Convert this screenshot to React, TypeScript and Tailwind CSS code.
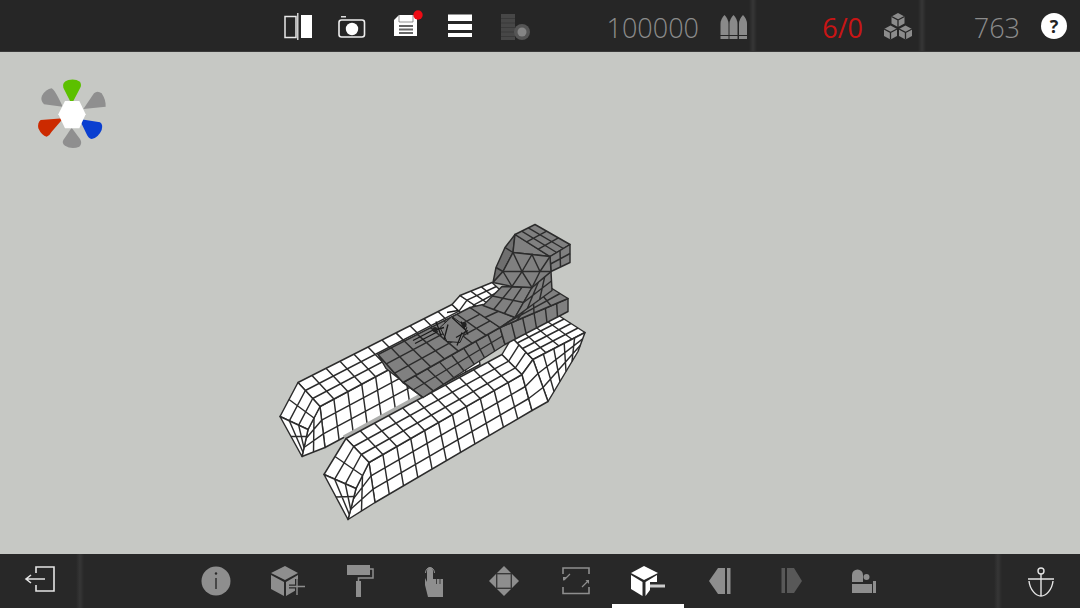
import React from "react";

type P = [number, number];
const lerp = (a: P, b: P, t: number): P => [a[0] + (b[0] - a[0]) * t, a[1] + (b[1] - a[1]) * t];
const LINE = "#2c2c2c";
const SW = 1.45;

function Grid({ q, nu, nv, fill }: { q: [P, P, P, P]; nu: number; nv: number; fill: string }) {
  const [a, b, c, d] = q;
  const lines: string[] = [];
  for (let i = 1; i < nu; i++) {
    const t = i / nu;
    const p = lerp(a, b, t), r = lerp(d, c, t);
    lines.push(`M${p[0]} ${p[1]}L${r[0]} ${r[1]}`);
  }
  for (let j = 1; j < nv; j++) {
    const t = j / nv;
    const p = lerp(a, d, t), r = lerp(b, c, t);
    lines.push(`M${p[0]} ${p[1]}L${r[0]} ${r[1]}`);
  }
  return (
    <g>
      <polygon points={q.map((p) => p.join(",")).join(" ")} fill={fill} stroke={LINE} strokeWidth={SW} strokeLinejoin="round" />
      <path d={lines.join("")} fill="none" stroke={LINE} strokeWidth={SW} />
    </g>
  );
}

const W = "#ffffff";
const G = "#808080";

function FarHull() {
  return (
    <g>
      <Grid q={[[320, 407], [473, 325], [480, 365], [325, 448]]} nu={11} nv={3} fill={W} />
      <Grid q={[[320, 407], [325, 448], [302, 457], [308, 430]]} nu={3} nv={2} fill={W} />
      <Grid q={[[298, 383], [452, 305], [473, 325], [320, 407]]} nu={11} nv={3} fill={W} />
      <Grid q={[[280, 417], [298, 383], [320, 407], [308, 430]]} nu={2} nv={3} fill={W} />
      <Grid q={[[280, 417], [308, 430], [305, 444], [302, 457]]} nu={3} nv={2} fill={W} />
      <Grid q={[[452, 305], [460, 296], [481, 310], [473, 325]]} nu={1} nv={3} fill={W} />
      <Grid q={[[460, 296], [492, 283], [505, 295], [481, 310]]} nu={3} nv={3} fill={W} />
    </g>
  );
}

function NearHull() {
  return (
    <g>
      <Grid q={[[369, 463], [522, 375], [532, 411], [375, 503]]} nu={11} nv={3} fill={W} />
      <Grid q={[[369, 463], [375, 503], [348, 520], [356, 489]]} nu={3} nv={2} fill={W} />
      <Grid q={[[346, 439], [502, 355], [522, 375], [369, 463]]} nu={11} nv={3} fill={W} />
      <Grid q={[[324, 475], [346, 439], [369, 463], [356, 489]]} nu={2} nv={3} fill={W} />
      <Grid q={[[324, 475], [356, 489], [352, 505], [348, 520]]} nu={3} nv={2} fill={W} />
      <Grid q={[[502, 355], [512, 338], [533, 360], [522, 375]]} nu={1} nv={3} fill={W} />
      <Grid q={[[512, 338], [557, 315], [585, 333], [533, 360]]} nu={4} nv={4} fill={W} />
      <Grid q={[[533, 360], [585, 333], [578, 352], [548, 402]]} nu={5} nv={3} fill={W} />
      <Grid q={[[522, 375], [533, 360], [548, 402], [532, 411]]} nu={1} nv={3} fill={W} />
    </g>
  );
}

function Mesh() {
  return (
    <svg viewBox="0 53 1080 501" className="absolute inset-0 w-full h-full">
      <FarHull />
      <polygon points="343,436 420,394 425,398 346,441" fill="#adaeac" />
      <NearHull />
      {/* grey superstructure */}
      <Grid q={[[403, 383], [500, 328], [505, 345], [423, 398]]} nu={8} nv={2} fill={G} />
      <Grid q={[[500, 328], [568, 299], [568, 312], [505, 345]]} nu={6} nv={1} fill={G} />
      <polygon points="378,355 403,383 423,398 386,369" fill={G} stroke={LINE} strokeWidth={SW} strokeLinejoin="round" />
      <Grid q={[[378, 355], [470, 308], [500, 328], [403, 383]]} nu={7} nv={3} fill={G} />
      <Grid q={[[470, 308], [483, 305], [515, 318], [500, 328]]} nu={1} nv={2} fill={G} />
      <Grid q={[[515, 318], [552, 289], [568, 299], [500, 328]]} nu={4} nv={2} fill={G} />
      {/* neck */}
      <Grid q={[[502, 287], [532, 288], [515, 318], [483, 306]]} nu={3} nv={2} fill={G} />
      <Grid q={[[532, 288], [551, 272], [552, 291], [515, 318]]} nu={3} nv={2} fill={G} />
      {/* head */}
      <polygon points="515,235 505,248 496,268 493,283 503,272 513,253" fill="#6f6f6f" stroke={LINE} strokeWidth={SW} strokeLinejoin="round" />
      <path d="M505 248L513 253M496 268L503 272" stroke={LINE} strokeWidth={SW} fill="none" />
      <polygon points="515,235 550,257 513,253" fill={G} stroke={LINE} strokeWidth={SW} strokeLinejoin="round" />
      <Grid q={[[515, 235], [535, 225], [570, 245], [550, 257]]} nu={3} nv={3} fill={G} />
      <Grid q={[[550, 257], [570, 245], [570, 263], [551, 272]]} nu={2} nv={2} fill={G} />
      <polygon points="513,253 550,257 551,272 532,288 512,287 493,283 503,272" fill={G} stroke={LINE} strokeWidth={SW} strokeLinejoin="round" />
      <path
        d="M513 253L522 272L532 255L540 272L550 257M503 272H551M503 272L512 287L522 272L532 288L540 272"
        fill="none"
        stroke={LINE}
        strokeWidth={SW}
      />
      {/* turret */}
      <polygon points="440,328 452,317 467,328 460,343 447,342" fill={G} stroke="#222" strokeWidth="1" />
      <path
        d="M413 341L436 329M415 344L438 332M447 313L458 311M452 318L465 330M456 338L468 331M448 325L444 340M436 322L441 336M433 331L444 328M461 322L468 335M462 333L457 346"
        fill="none"
        stroke="#1a1a1a"
        strokeWidth="1.3"
      />
      <circle cx="435" cy="330" r="2.6" fill="#222" />
      <circle cx="464" cy="325" r="2.6" fill="#222" />
    </svg>
  );
}

function Gizmo() {
  return (
    <svg viewBox="0 0 300 300" className="relative w-[100px] h-[100px]">
      <path d="M128 125L72 118Q60 105 66 92Q78 72 95 70Q105 75 128 125Z" fill="#8f8f8f" />
      <path d="M190 132L222 85Q232 76 245 85Q258 105 257 125Z" fill="#8f8f8f" />
      <path d="M155 188L130 225Q125 235 135 242Q155 255 178 245Q188 235 180 222Z" fill="#8f8f8f" />
      <path d="M155 118L130 68Q125 52 145 45Q165 40 180 50Q186 60 180 70Z" fill="#5cc000" />
      <path d="M130 160L62 165Q52 172 55 190Q65 212 80 215Q90 210 95 200Z" fill="#cc2a00" />
      <path d="M178 162L240 172Q250 178 245 195Q235 218 215 222Q205 220 200 208Z" fill="#0a3fd0" />
      <polygon points="135,108 178,108 197,148 178,190 135,190 115,148" fill="#ffffff" />
    </svg>
  );
}

function Slot({ x, y, w, h, children }: { x: number; y: number; w: number; h: number; children?: React.ReactNode }) {
  return (
    <svg viewBox={`${x} ${y} ${w} ${h}`} style={{ width: w, height: h }} className="shrink-0 block">
      {children}
    </svg>
  );
}

const Divider = () => (
  <div className="w-[8px] h-full shrink-0 bg-[linear-gradient(to_right,transparent,#363636,transparent)]" />
);

const GR = "#8e8e8e";

function Cube({ cx, cy }: { cx: number; cy: number }) {
  return (
    <g>
      <polygon
        points={`${cx},${cy - 7} ${cx + 6.5},${cy - 3.5} ${cx + 6.5},${cy + 3.5} ${cx},${cy + 7} ${cx - 6.5},${cy + 3.5} ${cx - 6.5},${cy - 3.5}`}
        fill="#8c8c8c"
      />
      <path d={`M${cx} ${cy + 7}V${cy}L${cx - 6.5} ${cy - 3.5}M${cx} ${cy}L${cx + 6.5} ${cy - 3.5}`} stroke="#262626" strokeWidth="1.3" fill="none" />
    </g>
  );
}

function TopBar() {
  const num = "text-[27px] leading-none font-light text-right pt-[3px] text-[#8c8c8c] shrink-0 [font-family:'Open_Sans',sans-serif]";
  return (
    <div className="h-[52px] bg-[#262626] flex items-center pl-[271px] shrink-0 border-b border-[#3a3a3a]">
      <Slot x={271} y={0} w={54} h={52}>
        <rect x="285" y="16.5" width="11" height="21" fill="none" stroke="#e8e8e8" strokeWidth="1.5" />
        <rect x="297" y="13" width="1.5" height="27" fill="#cfcfcf" />
        <rect x="301" y="15" width="11" height="23" fill="#fff" />
      </Slot>
      <Slot x={325} y={0} w={54} h={52}>
        <rect x="339" y="20" width="25.5" height="17" rx="2.5" fill="none" stroke="#eee" strokeWidth="1.6" />
        <rect x="341" y="16" width="5" height="1.5" fill="#ddd" />
        <circle cx="352" cy="29" r="6.2" fill="#fff" />
      </Slot>
      <Slot x={379} y={0} w={54} h={52}>
        <path d="M399 15H417V36H394V20Z" fill="#fff" />
        <path d="M399 15V22H413V15" fill="none" stroke="#666" strokeWidth="0.7" />
        <rect x="399" y="25" width="14" height="2" fill="#666" />
        <rect x="399" y="28.5" width="14" height="2" fill="#666" />
        <rect x="399" y="32" width="14" height="2" fill="#666" />
        <circle cx="418" cy="15" r="4.7" fill="#ee0b14" />
      </Slot>
      <Slot x={433} y={0} w={54} h={52}>
        <rect x="448" y="14.5" width="24" height="6.5" fill="#fff" />
        <rect x="448" y="24" width="24" height="6" fill="#fff" />
        <rect x="448" y="33" width="24" height="4" fill="#fff" />
      </Slot>
      <Slot x={487} y={0} w={54} h={52}>
        <path d="M501 14H515V40H501Z" fill="#474747" />
        <path d="M501 18.5H515M501 23H515M501 27.5H515M501 32H515M501 36.5H515" stroke="#3a3a3a" strokeWidth="1" />
        <circle cx="522" cy="32" r="8" fill="#555" />
        <circle cx="522" cy="32" r="4.5" fill="#858585" />
      </Slot>
      <div className={`${num} w-[158px]`}>100000</div>
      <Slot x={699} y={0} w={50} h={52}>
        {[720.5, 729.5, 739].map((x) => (
          <g key={x}>
            <path d={`M${x} 24Q${x} 19 ${x + 4} 15Q${x + 8} 19 ${x + 8} 24V35H${x}Z`} fill="#8a8a8a" />
            <rect x={x} y={36} width="8" height="3" fill="#8a8a8a" />
          </g>
        ))}
      </Slot>
      <Divider />
      <div className={`${num} !text-[#c91515] !font-normal w-[106px]`}>6/0</div>
      <Slot x={861} y={0} w={55} h={52}>
        <Cube cx={896} cy={20} />
        <Cube cx={888.5} cy={32.5} />
        <Cube cx={903.5} cy={32.5} />
      </Slot>
      <Divider />
      <div className={`${num} w-[94px]`}>763</div>
      <div className="w-[62px] flex pl-[21px] shrink-0">
        <div className="w-[26px] h-[26px] rounded-full bg-white flex items-center justify-center text-[18px] font-bold text-[#222] leading-none [font-family:'Open_Sans',sans-serif]">
          ?
        </div>
      </div>
    </div>
  );
}

function BottomBar() {
  const Cell = ({ x, active, children }: { x: number; active?: boolean; children: React.ReactNode }) => (
    <div className={`w-[72px] h-[54px] shrink-0 ${active ? "border-b-4 border-white" : ""}`}>
      <Slot x={x} y={554} w={72} h={active ? 50 : 54}>
        {children}
      </Slot>
    </div>
  );
  return (
    <div className="h-[54px] bg-[#282828] flex items-center shrink-0">
      <Slot x={0} y={554} w={76} h={54}>
        <path d="M36 573V567H54V591H36V585" fill="none" stroke="#e4e4e4" strokeWidth="1.6" />
        <path d="M45 579H27M31 575L26 579L31 583" fill="none" stroke="#e4e4e4" strokeWidth="1.6" />
      </Slot>
      <Divider />
      <div className="w-[96px] shrink-0" />
      <Cell x={180}>
        <circle cx="216" cy="581" r="14.5" fill={GR} />
        <rect x="215.3" y="578" width="1.4" height="11" fill="#2a2a2a" />
        <circle cx="216" cy="573.5" r="1.2" fill="#2a2a2a" />
      </Cell>
      <Cell x={252}>
        <path d="M285 566L298 573L285 580L271 573Z" fill={GR} />
        <path d="M271 575L284 582V596L271 589Z" fill={GR} />
        <path d="M286 582L298 575V589L286 596Z" fill={GR} />
        <path d="M289 586.5H305M297 579V595" stroke="#282828" strokeWidth="4" />
        <path d="M289 586.5H305M297 579V595" stroke="#8e8e8e" strokeWidth="1.4" />
      </Cell>
      <Cell x={324}>
        <rect x="347" y="565" width="23" height="10" fill={GR} />
        <path d="M370 569H373V578H358.5V581" fill="none" stroke={GR} strokeWidth="1.5" />
        <rect x="356" y="581" width="5" height="16" fill={GR} />
      </Cell>
      <Cell x={396}>
        <path d="M427 571C427 566 433 566 433 571V579H443V597H428L425 585V578L427 582Z" fill={GR} />
        <path d="M425.5 573a4.5 5.5 0 0 1 9 0" fill="none" stroke={GR} strokeWidth="1" />
        <path d="M436.5 579V584M440 579V584" stroke="#282828" strokeWidth="0.8" />
      </Cell>
      <Cell x={468}>
        <path d="M504 566L511 573H497Z" fill={GR} />
        <path d="M504 596L511 589H497Z" fill={GR} />
        <path d="M489 581L496 574V588Z" fill={GR} />
        <path d="M519 581L512 574V588Z" fill={GR} />
        <rect x="497" y="574" width="14" height="14" fill={GR} stroke="#4a4a4a" strokeWidth="1" />
      </Cell>
      <Cell x={540}>
        <path d="M563 574V568H589V574M563 587V593.5H589V587" fill="none" stroke={GR} strokeWidth="1.6" />
        <path d="M563 581L563 577H566.5ZM589 584V580H585.5Z" fill={GR} />
        <path d="M564 580L570 574M588 581L582 587" stroke={GR} strokeWidth="1.2" />
      </Cell>
      <Cell x={612} active>
        <path d="M644 566L658 573L644 580L631 573Z" fill="#fff" />
        <path d="M631 575L642.5 582V596L631 589Z" fill="#fff" />
        <path d="M645.5 582L657 575V582H650V590L645.5 596Z" fill="#fff" />
        <rect x="650" y="584.5" width="15" height="3" fill="#ccc" />
      </Cell>
      <Cell x={684}>
        <path d="M709 581L718 568H725V594H718Z" fill={GR} />
        <rect x="727" y="568" width="3.5" height="26" fill={GR} />
      </Cell>
      <Cell x={756}>
        <rect x="781.5" y="568" width="3.5" height="25" fill="#585858" />
        <path d="M802 581L794 568H787V593H794Z" fill="#585858" />
      </Cell>
      <Cell x={828}>
        <path d="M852 582V575a5.5 5.5 0 0 1 11 0V582Z" fill={GR} />
        <circle cx="866.5" cy="577" r="3" fill={GR} />
        <rect x="852" y="584" width="20" height="9" fill={GR} />
        <rect x="873" y="581" width="3" height="12" fill={GR} />
      </Cell>
      <div className="flex-1" />
      <Divider />
      <Slot x={1002} y={554} w={78} h={54}>
        <circle cx="1041" cy="571" r="3" fill="none" stroke="#e4e4e4" strokeWidth="1.4" />
        <path d="M1028 579H1054M1041 574V596M1029 581C1030 590 1036 596 1041 596C1046 596 1052 590 1053 581" fill="none" stroke="#e4e4e4" strokeWidth="1.4" />
      </Slot>
    </div>
  );
}

export default function App() {
  return (
    <div className="w-[1080px] h-[608px] flex flex-col overflow-hidden bg-[#c6c8c4]">
      <TopBar />
      <div className="relative flex-1 pl-[20px] pt-[13px]">
        <Mesh />
        <Gizmo />
      </div>
      <BottomBar />
    </div>
  );
}
